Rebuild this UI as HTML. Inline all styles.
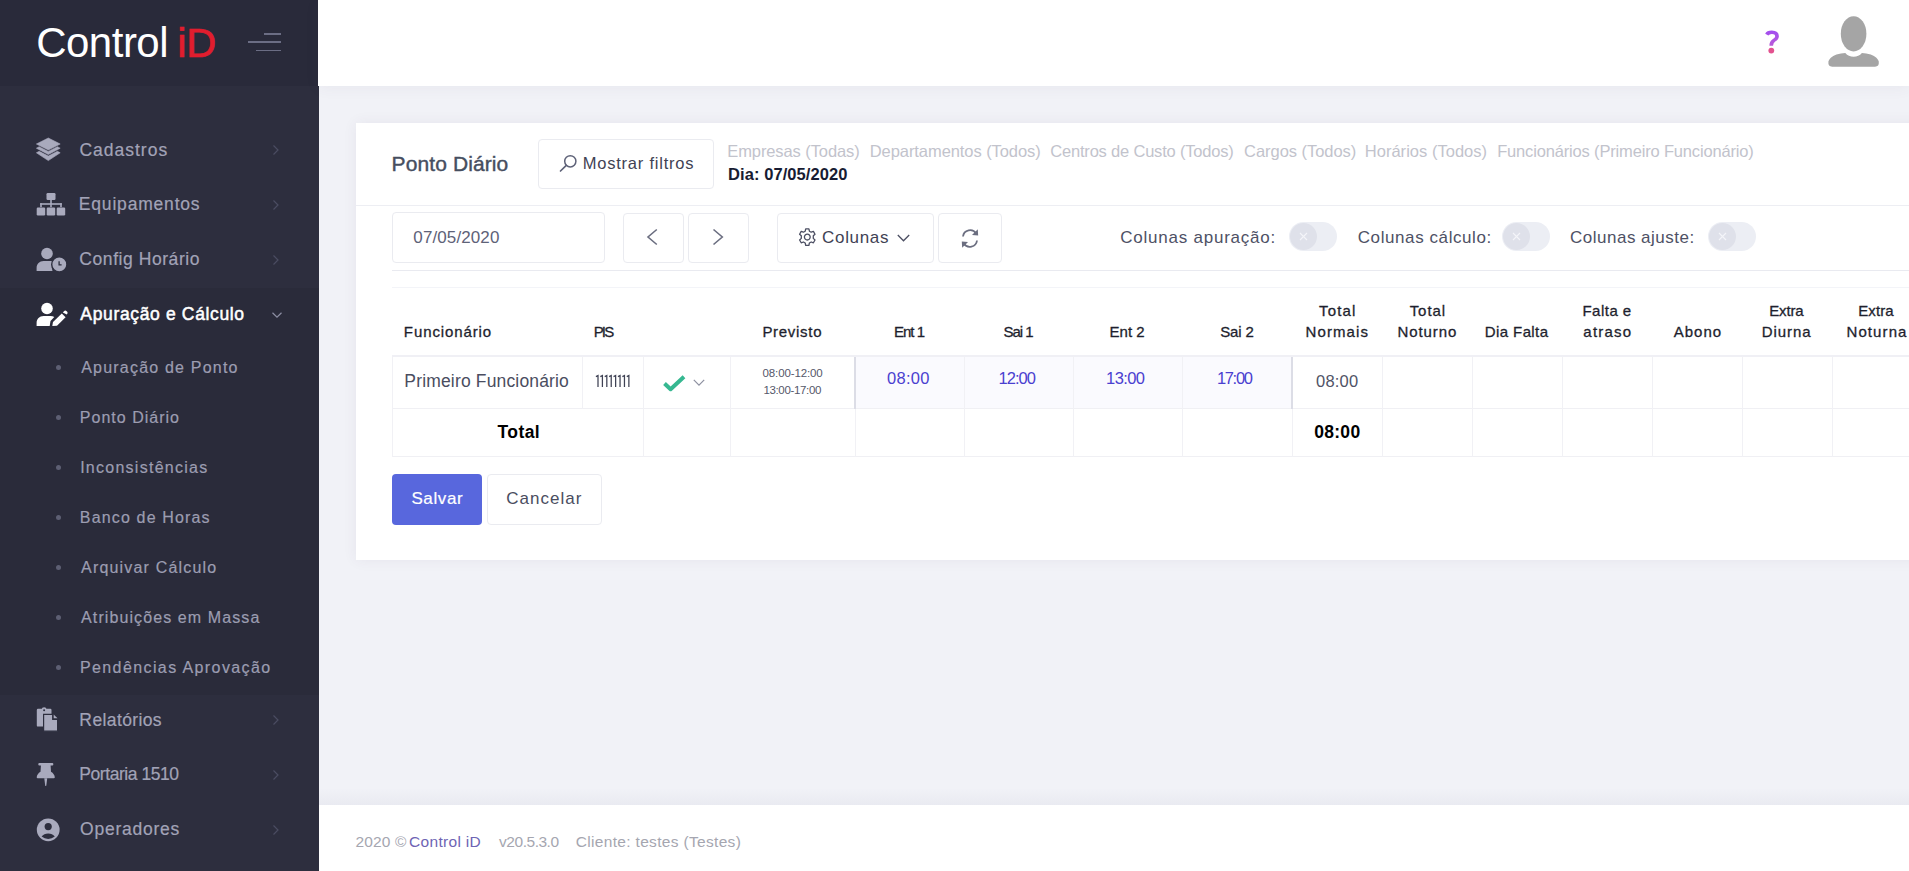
<!DOCTYPE html>
<html><head><meta charset="utf-8">
<style>
html,body{margin:0;padding:0}
body{width:1909px;height:871px;overflow:hidden;position:relative;background:#f1f2f7;font-family:"Liberation Sans",sans-serif}
.a{position:absolute}
.t{position:absolute;line-height:0;white-space:pre;font-family:"Liberation Sans",sans-serif}
.bx{position:absolute;box-sizing:border-box;border:1px solid #eaebf0;border-radius:4px;background:#fff}
.hl{position:absolute;height:1px;background:#ebedf3}
.vl{position:absolute;width:1px;background:#ebedf3}
svg{position:absolute;overflow:visible}
</style></head><body>
<!-- sidebar -->
<div class="a" style="left:0;top:0;width:319px;height:871px;background:#2d2e3e"></div>
<div class="a" style="left:0;top:0;width:318px;height:86px;background:#292a3a"></div>
<div class="a" style="left:0;top:288px;width:319px;height:407px;background:#2a2b3a"></div>
<!-- hamburger -->
<div class="a" style="left:264px;top:33px;width:17px;height:1.5px;background:#6b6d84"></div>
<div class="a" style="left:248px;top:41px;width:33px;height:1.5px;background:#6b6d84"></div>
<div class="a" style="left:256px;top:49.5px;width:25px;height:1.5px;background:#6b6d84"></div>
<!-- icons -->
<svg style="left:36px;top:137px" width="25" height="25" viewBox="0 0 25 25"><g fill="#a9aabd" stroke="#a9aabd" stroke-width="0.6" stroke-linejoin="round">
<path d="M12.3 1 L24.2 7 L12.3 13 L0.4 7 Z"/>
<path d="M0.4 11.2 L3.2 9.7 L12.3 14.4 L21.4 9.7 L24.2 11.2 L12.3 17.6 Z"/>
<path d="M0.4 15.8 L3.2 14.3 L12.3 19.1 L21.4 14.3 L24.2 15.8 L12.3 23.6 Z"/></g></svg>
<svg style="left:36px;top:192px" width="31" height="25" viewBox="0 0 31 25"><g fill="#a9aabd">
<rect x="10.5" y="1" width="9" height="7" rx="1.2"/>
<rect x="14.2" y="7" width="1.6" height="5"/>
<rect x="4.2" y="11.2" width="21.6" height="1.6"/>
<rect x="4.2" y="11.2" width="1.6" height="4"/><rect x="14.2" y="11.2" width="1.6" height="4"/><rect x="24.2" y="11.2" width="1.6" height="4"/>
<rect x="0.7" y="15.5" width="8.5" height="8" rx="1.2"/><rect x="10.7" y="15.5" width="8.5" height="8" rx="1.2"/><rect x="20.7" y="15.5" width="8.5" height="8" rx="1.2"/></g></svg>
<svg style="left:36px;top:247px" width="31" height="25" viewBox="0 0 31 25"><g fill="#a9aabd">
<circle cx="11" cy="6.5" r="5.8"/>
<path d="M0.6 24 L0.6 21 C0.6 17 3.5 14 7.5 14 L14.5 14 C16.5 14 18 14.6 19 15.5 C17.2 17.2 16.2 19.5 16.2 22 C16.2 22.7 16.3 23.4 16.5 24 Z"/>
</g><circle cx="23.3" cy="17.4" r="7.6" fill="#a9aabd" stroke="#2d2e3e" stroke-width="1.4"/>
<path d="M23.1 14.2 L23.1 17.8 L25.6 17.8" stroke="#2d2e3e" stroke-width="1.3" fill="none"/></svg>
<svg style="left:36px;top:302px" width="31" height="25" viewBox="0 0 31 25"><g fill="#ffffff">
<circle cx="11" cy="6.5" r="5.8"/>
<path d="M0.6 24 L0.6 21 C0.6 17 3.5 14 7.5 14 L14.5 14 C16 14 17.3 14.4 18.3 15 L14.5 19 L13.7 24 Z"/>
<path d="M16.3 24 L17 20 L25.8 11.4 L29.6 15.2 L21 23.8 Z"/>
<path d="M26.8 10.4 L28 9.2 C28.8 8.4 29.8 8.4 30.6 9.2 L31 9.6 C31.8 10.4 31.8 11.4 31 12.2 L30.8 12.4 Z"/></g></svg>
<svg style="left:36px;top:707px" width="23" height="26" viewBox="0 0 23 26">
<path d="M2 1.8 H14.3 Q15.5 1.8 15.5 3 V19.6 H2 Q0.8 19.6 0.8 18.4 V3 Q0.8 1.8 2 1.8 Z" fill="#a9aabd"/>
<circle cx="8.1" cy="2.6" r="2.4" fill="#a9aabd"/><circle cx="8.1" cy="3.3" r="1" fill="#2d2e3e"/>
<path d="M7.6 7.4 H16.7 V12.3 H21.6 V24.2 H7.6 Z" fill="#a9aabd" stroke="#2d2e3e" stroke-width="1.2"/>
<path d="M17.7 7.6 L21.5 11.3 L17.7 11.3 Z" fill="#a9aabd"/></svg>
<svg style="left:36px;top:762px" width="20" height="26" viewBox="0 0 20 26"><g fill="#a9aabd">
<path d="M3.4 1 L16.4 1 Q17.3 1 17.3 1.9 L17.3 2.6 Q17.3 3.6 16.3 3.6 L14.6 3.6 L15 9.8 Q18.4 11.8 18.8 15.3 Q18.8 16.3 17.8 16.3 L1.7 16.3 Q0.7 16.3 0.7 15.3 Q1.1 11.8 4.5 9.8 L4.9 3.6 L3.3 3.6 Q2.3 3.6 2.3 2.6 L2.3 1.9 Q2.3 1 3.4 1 Z"/>
<path d="M8.3 16.3 L11.2 16.3 L10.3 23.5 Q9.75 24.6 9.2 23.5 Z"/></g></svg>
<svg style="left:36px;top:817px" width="25" height="25" viewBox="0 0 25 25">
<circle cx="12.2" cy="12.8" r="11.4" fill="#a9aabd"/>
<circle cx="12.2" cy="9.6" r="3.6" fill="#2d2e3e"/>
<path d="M5.6 19.6 Q8 16.6 12.2 16.6 Q16.4 16.6 18.8 19.6 Q15.9 21.9 12.2 21.9 Q8.5 21.9 5.6 19.6 Z" fill="#2d2e3e"/></svg>
<!-- chevrons -->
<svg style="left:272px;top:144px" width="8" height="12" viewBox="0 0 8 12"><path d="M1.5 1.5 L6 6 L1.5 10.5" stroke="#4b4d62" stroke-width="1.2" fill="none"/></svg>
<svg style="left:272px;top:199px" width="8" height="12" viewBox="0 0 8 12"><path d="M1.5 1.5 L6 6 L1.5 10.5" stroke="#4b4d62" stroke-width="1.2" fill="none"/></svg>
<svg style="left:272px;top:254px" width="8" height="12" viewBox="0 0 8 12"><path d="M1.5 1.5 L6 6 L1.5 10.5" stroke="#4b4d62" stroke-width="1.2" fill="none"/></svg>
<svg style="left:271px;top:311px" width="12" height="8" viewBox="0 0 12 8"><path d="M1.5 1.8 L6 6.2 L10.5 1.8" stroke="#8c8ea3" stroke-width="1.2" fill="none"/></svg>
<svg style="left:272px;top:714px" width="8" height="12" viewBox="0 0 8 12"><path d="M1.5 1.5 L6 6 L1.5 10.5" stroke="#4b4d62" stroke-width="1.2" fill="none"/></svg>
<svg style="left:272px;top:769px" width="8" height="12" viewBox="0 0 8 12"><path d="M1.5 1.5 L6 6 L1.5 10.5" stroke="#4b4d62" stroke-width="1.2" fill="none"/></svg>
<svg style="left:272px;top:824px" width="8" height="12" viewBox="0 0 8 12"><path d="M1.5 1.5 L6 6 L1.5 10.5" stroke="#4b4d62" stroke-width="1.2" fill="none"/></svg>
<!-- bullets -->
<div class="a" style="left:56px;top:365px;width:5px;height:5px;border-radius:50%;background:#5d5f73"></div>
<div class="a" style="left:56px;top:415px;width:5px;height:5px;border-radius:50%;background:#5d5f73"></div>
<div class="a" style="left:56px;top:465px;width:5px;height:5px;border-radius:50%;background:#5d5f73"></div>
<div class="a" style="left:56px;top:515px;width:5px;height:5px;border-radius:50%;background:#5d5f73"></div>
<div class="a" style="left:56px;top:565px;width:5px;height:5px;border-radius:50%;background:#5d5f73"></div>
<div class="a" style="left:56px;top:615px;width:5px;height:5px;border-radius:50%;background:#5d5f73"></div>
<div class="a" style="left:56px;top:665px;width:5px;height:5px;border-radius:50%;background:#5d5f73"></div>

<!-- header -->
<div class="a" style="left:318px;top:0;width:1591px;height:86px;background:#fff;box-shadow:0 2px 14px rgba(82,63,105,0.06)"></div>
<svg style="left:1760px;top:28px" width="24" height="30" viewBox="0 0 24 30">
<defs><linearGradient id="qg" x1="0" y1="0" x2="0" y2="1"><stop offset="0" stop-color="#a24ef0"/><stop offset="1" stop-color="#b85ad8"/></linearGradient></defs>
<path d="M5.2 5.8 Q6.5 2.6 11.8 2.6 Q18.8 2.8 18.9 8.3 Q18.8 11.4 15.2 13.6 Q13.3 14.8 13 17.8 L9.4 17.8 Q9.3 13.4 12.6 11.2 Q15.3 9.6 15.2 8.2 Q15 5.8 11.8 5.9 Q9.5 5.9 8.3 7.6 Z" fill="url(#qg)"/>
<circle cx="11.3" cy="22.6" r="2.9" fill="#e3528f"/></svg>
<svg style="left:1827px;top:15px" width="53" height="53" viewBox="0 0 53 53"><g fill="#a5a5a5">
<ellipse cx="26.6" cy="18.8" rx="12.8" ry="17.6"/>
<path d="M9.5 39.5 Q14 38.4 18.3 38 Q21.5 41.8 26.6 41.8 Q31.7 41.8 34.9 38 Q39.2 38.4 43.7 39.5 Q51 42.6 51.8 46.6 Q52.3 51.8 48 51.8 L5.2 51.8 Q0.9 51.8 1.4 46.6 Q2.2 42.6 9.5 39.5 Z"/></g></svg>

<!-- card -->
<div class="a" style="left:356px;top:123px;width:1600px;height:437px;background:#fff;box-shadow:0 0 13px rgba(82,63,105,0.07)"></div>
<div class="hl" style="left:356px;top:205px;width:1553px;background:#edeef3"></div>
<div class="bx" style="left:538px;top:139px;width:176px;height:50px"></div>
<svg style="left:559px;top:154px" width="20" height="19" viewBox="0 0 20 19"><circle cx="11.3" cy="7.3" r="5.6" stroke="#5e6278" stroke-width="1.5" fill="none"/><path d="M7.3 11.3 L1.5 17" stroke="#5e6278" stroke-width="1.7" stroke-linecap="round"/></svg>
<div class="bx" style="left:392px;top:212px;width:213px;height:51px"></div>
<div class="bx" style="left:623px;top:213px;width:61px;height:50px"></div>
<div class="bx" style="left:688px;top:213px;width:61px;height:50px"></div>
<svg style="left:645px;top:228px" width="14" height="18" viewBox="0 0 14 18"><path d="M11.8 1.5 L3 9 L11.8 16.5" stroke="#6b6e80" stroke-width="1.6" fill="none"/></svg>
<svg style="left:711px;top:228px" width="14" height="18" viewBox="0 0 14 18"><path d="M2.5 1.5 L11.3 9 L2.5 16.5" stroke="#6b6e80" stroke-width="1.6" fill="none"/></svg>
<div class="bx" style="left:777px;top:213px;width:157px;height:50px"></div>
<div class="bx" style="left:938px;top:213px;width:64px;height:50px"></div>
<svg style="left:797px;top:227px" width="20" height="20" viewBox="0 0 20 20"><g transform="translate(10.3,10.1)" fill="none" stroke="#4b4e62" stroke-width="1.3">
<path d="M-1.6 -8.2 L1.6 -8.2 L2.1 -5.9 L3.9 -4.9 L6.1 -5.7 L7.7 -2.9 L6 -1.3 L6 1.3 L7.7 2.9 L6.1 5.7 L3.9 4.9 L2.1 5.9 L1.6 8.2 L-1.6 8.2 L-2.1 5.9 L-3.9 4.9 L-6.1 5.7 L-7.7 2.9 L-6 1.3 L-6 -1.3 L-7.7 -2.9 L-6.1 -5.7 L-3.9 -4.9 L-2.1 -5.9 Z" stroke-linejoin="round"/>
<circle cx="0" cy="0" r="2.9"/></g></svg>
<svg style="left:896px;top:233px" width="15" height="10" viewBox="0 0 15 10"><path d="M1.8 2 L7.5 7.8 L13.2 2" stroke="#4b4e62" stroke-width="1.3" fill="none"/></svg>
<svg style="left:960px;top:228px" width="20" height="21" viewBox="0 0 20 21"><g fill="none" stroke="#6b6e80" stroke-width="1.8">
<path d="M3 8.5 A7.2 7.2 0 0 1 16.2 5.5"/><path d="M17 12.5 A7.2 7.2 0 0 1 3.8 15.5"/></g>
<g fill="#6b6e80"><path d="M17.8 1.2 L18.2 7.6 L12 7 Z"/><path d="M2.2 19.8 L1.8 13.4 L8 14 Z"/></g></svg>
<div class="hl" style="left:392px;top:270px;width:1517px;background:#e9eaf0"></div>
<div class="hl" style="left:392px;top:287px;width:1517px;background:#f3f4f8"></div>
<!-- toggles -->
<div class="a" style="left:1289px;top:222px;width:48px;height:29px;border-radius:15px;background:#eceef4"></div>
<div class="a" style="left:1290px;top:223px;width:27px;height:27px;border-radius:50%;background:#dfe1ea"></div>
<div class="a" style="left:1502px;top:222px;width:48px;height:29px;border-radius:15px;background:#eceef4"></div>
<div class="a" style="left:1503px;top:223px;width:27px;height:27px;border-radius:50%;background:#dfe1ea"></div>
<div class="a" style="left:1708px;top:222px;width:48px;height:29px;border-radius:15px;background:#eceef4"></div>
<div class="a" style="left:1709px;top:223px;width:27px;height:27px;border-radius:50%;background:#dfe1ea"></div>
<svg style="left:1299px;top:232px" width="9" height="9" viewBox="0 0 9 9"><path d="M1 1 L8 8 M8 1 L1 8" stroke="#f4f5f9" stroke-width="1.1"/></svg>
<svg style="left:1512px;top:232px" width="9" height="9" viewBox="0 0 9 9"><path d="M1 1 L8 8 M8 1 L1 8" stroke="#f4f5f9" stroke-width="1.1"/></svg>
<svg style="left:1718px;top:232px" width="9" height="9" viewBox="0 0 9 9"><path d="M1 1 L8 8 M8 1 L1 8" stroke="#f4f5f9" stroke-width="1.1"/></svg>

<!-- table -->
<div class="a" style="left:855px;top:356px;width:437px;height:53px;background:#fafafe"></div>
<div class="hl" style="left:392px;top:355px;width:1517px;height:2px;background:#f0f0f5"></div>
<div class="hl" style="left:392px;top:408px;width:1517px;background:#f0f0f4"></div>
<div class="hl" style="left:392px;top:456px;width:1517px;background:#f0f0f4"></div>
<div class="vl" style="left:392px;top:357px;height:100px;background:#f1f1f5"></div>
<div class="vl" style="left:582px;top:357px;height:52px;background:#f1f1f5"></div>
<div class="vl" style="left:643px;top:357px;height:100px;background:#f1f1f5"></div>
<div class="vl" style="left:730px;top:357px;height:100px;background:#f1f1f5"></div>
<div class="vl" style="left:855px;top:357px;height:100px;background:#f1f1f5"></div>
<div class="vl" style="left:854px;top:357px;height:52px;width:2px;background:#dcdde6"></div>
<div class="vl" style="left:964px;top:357px;height:100px;background:#f1f1f5"></div>
<div class="vl" style="left:1073px;top:357px;height:100px;background:#f1f1f5"></div>
<div class="vl" style="left:1182px;top:357px;height:100px;background:#f1f1f5"></div>
<div class="vl" style="left:1292px;top:357px;height:100px;background:#f1f1f5"></div>
<div class="vl" style="left:1291px;top:357px;height:52px;width:2px;background:#dcdde6"></div>
<div class="vl" style="left:1382px;top:357px;height:100px;background:#f1f1f5"></div>
<div class="vl" style="left:1472px;top:357px;height:100px;background:#f1f1f5"></div>
<div class="vl" style="left:1562px;top:357px;height:100px;background:#f1f1f5"></div>
<div class="vl" style="left:1652px;top:357px;height:100px;background:#f1f1f5"></div>
<div class="vl" style="left:1742px;top:357px;height:100px;background:#f1f1f5"></div>
<div class="vl" style="left:1832px;top:357px;height:100px;background:#f1f1f5"></div>
<svg style="left:663px;top:375px" width="23" height="16" viewBox="0 0 23 16"><path d="M1.5 8.5 L7.6 14.2 L21 1.8" stroke="#36b891" stroke-width="4" fill="none" stroke-linejoin="round"/></svg>
<svg style="left:692px;top:378px" width="14" height="10" viewBox="0 0 14 10"><path d="M1.8 1.8 L7 7.2 L12.2 1.8" stroke="#8d90a0" stroke-width="1.2" fill="none"/></svg>
<svg style="left:595px;top:375px" width="36" height="13" viewBox="0 0 36 13"><g stroke="#3f4254" stroke-width="1.25" fill="none"><path d="M0.90 1.6 L3.00 0.6 L3.00 11.9"/><path d="M5.31 1.6 L7.41 0.6 L7.41 11.9"/><path d="M9.72 1.6 L11.82 0.6 L11.82 11.9"/><path d="M14.13 1.6 L16.23 0.6 L16.23 11.9"/><path d="M18.54 1.6 L20.64 0.6 L20.64 11.9"/><path d="M22.95 1.6 L25.05 0.6 L25.05 11.9"/><path d="M27.36 1.6 L29.46 0.6 L29.46 11.9"/><path d="M31.77 1.6 L33.87 0.6 L33.87 11.9"/></g></svg>
<!-- buttons -->
<div class="a" style="left:392px;top:474px;width:90px;height:51px;border-radius:4px;background:#5867dd"></div>
<div class="bx" style="left:487px;top:474px;width:115px;height:51px"></div>

<!-- footer -->
<div class="a" style="left:319px;top:788px;width:1590px;height:17px;background:linear-gradient(to bottom,rgba(60,60,110,0),rgba(60,60,110,0.045))"></div>
<div class="a" style="left:319px;top:805px;width:1590px;height:66px;background:#fff"></div>
<div id="m1" class="t" style="left:79.40px;top:149.51px;font-size:17.5px;font-weight:normal;color:#a2a3b7;letter-spacing:0.998px;-webkit-text-stroke:0.2px #a2a3b7">Cadastros</div>
<div id="m2" class="t" style="left:78.84px;top:204.21px;font-size:17.5px;font-weight:normal;color:#a2a3b7;letter-spacing:0.809px;-webkit-text-stroke:0.2px #a2a3b7">Equipamentos</div>
<div id="m3" class="t" style="left:79.35px;top:258.81px;font-size:17.5px;font-weight:normal;color:#a2a3b7;letter-spacing:0.560px;-webkit-text-stroke:0.2px #a2a3b7">Config Horário</div>
<div id="m4" class="t" style="left:80.37px;top:313.60px;font-size:17.5px;font-weight:normal;color:#ffffff;letter-spacing:0.647px;-webkit-text-stroke:0.5px #ffffff">Apuração e Cálculo</div>
<div id="s1" class="t" style="left:81.25px;top:367.91px;font-size:16px;font-weight:normal;color:#9c9db1;letter-spacing:1.201px;-webkit-text-stroke:0.2px #9c9db1">Apuração de Ponto</div>
<div id="s2" class="t" style="left:79.87px;top:417.91px;font-size:16px;font-weight:normal;color:#9c9db1;letter-spacing:1.003px;-webkit-text-stroke:0.2px #9c9db1">Ponto Diário</div>
<div id="s3" class="t" style="left:80.15px;top:468.01px;font-size:16px;font-weight:normal;color:#9c9db1;letter-spacing:1.264px;-webkit-text-stroke:0.2px #9c9db1">Inconsistências</div>
<div id="s4" class="t" style="left:79.87px;top:517.91px;font-size:16px;font-weight:normal;color:#9c9db1;letter-spacing:1.151px;-webkit-text-stroke:0.2px #9c9db1">Banco de Horas</div>
<div id="s5" class="t" style="left:81.08px;top:568.10px;font-size:16px;font-weight:normal;color:#9c9db1;letter-spacing:1.179px;-webkit-text-stroke:0.2px #9c9db1">Arquivar Cálculo</div>
<div id="s6" class="t" style="left:81.08px;top:618.01px;font-size:16px;font-weight:normal;color:#9c9db1;letter-spacing:1.096px;-webkit-text-stroke:0.2px #9c9db1">Atribuições em Massa</div>
<div id="s7" class="t" style="left:79.94px;top:667.91px;font-size:16px;font-weight:normal;color:#9c9db1;letter-spacing:1.399px;-webkit-text-stroke:0.2px #9c9db1">Pendências Aprovação</div>
<div id="m5" class="t" style="left:79.37px;top:719.51px;font-size:17.5px;font-weight:normal;color:#a2a3b7;letter-spacing:0.386px;-webkit-text-stroke:0.2px #a2a3b7">Relatórios</div>
<div id="m6" class="t" style="left:79.37px;top:774.21px;font-size:17.5px;font-weight:normal;color:#a2a3b7;letter-spacing:-0.445px;-webkit-text-stroke:0.2px #a2a3b7">Portaria 1510</div>
<div id="m7" class="t" style="left:80.01px;top:829.01px;font-size:17.5px;font-weight:normal;color:#a2a3b7;letter-spacing:0.773px;-webkit-text-stroke:0.2px #a2a3b7">Operadores</div>
<div id="logo1" class="t" style="left:36.18px;top:42.51px;font-size:42px;font-weight:normal;color:#ffffff;letter-spacing:-0.502px">Control</div>
<div id="logo2" class="t" style="left:177.18px;top:42.50px;font-size:41.5px;font-weight:normal;color:#e11d2e;letter-spacing:-0.081px;-webkit-text-stroke:0.7px #e11d2e">iD</div>
<div id="ph" class="t" style="left:391.55px;top:163.60px;font-size:21px;font-weight:normal;color:#464e5f;letter-spacing:0.107px;-webkit-text-stroke:0.4px #464e5f">Ponto Diário</div>
<div id="mf" class="t" style="left:582.73px;top:162.91px;font-size:16.5px;font-weight:normal;color:#3f4254;letter-spacing:0.776px">Mostrar filtros</div>
<div id="f1" class="t" style="left:727.25px;top:150.80px;font-size:16.5px;font-weight:normal;color:#c2c3cc;letter-spacing:-0.095px">Empresas (Todas)</div>
<div id="f2" class="t" style="left:869.75px;top:150.80px;font-size:16.5px;font-weight:normal;color:#c2c3cc;letter-spacing:-0.071px">Departamentos (Todos)</div>
<div id="f3" class="t" style="left:1050.29px;top:150.80px;font-size:16.5px;font-weight:normal;color:#c2c3cc;letter-spacing:-0.197px">Centros de Custo (Todos)</div>
<div id="f4" class="t" style="left:1244.05px;top:150.80px;font-size:16.5px;font-weight:normal;color:#c2c3cc;letter-spacing:-0.044px">Cargos (Todos)</div>
<div id="f5" class="t" style="left:1364.74px;top:150.80px;font-size:16.5px;font-weight:normal;color:#c2c3cc;letter-spacing:0.027px">Horários (Todos)</div>
<div id="f6" class="t" style="left:1497.18px;top:150.80px;font-size:16.5px;font-weight:normal;color:#c2c3cc;letter-spacing:-0.166px">Funcionários (Primeiro Funcionário)</div>
<div id="dia" class="t" style="left:728.12px;top:174.41px;font-size:16.5px;font-weight:bold;color:#181c32;letter-spacing:0.067px">Dia: 07/05/2020</div>
<div id="date" class="t" style="left:413.36px;top:237.81px;font-size:17px;font-weight:normal;color:#5e6278;letter-spacing:0.103px">07/05/2020</div>
<div id="col" class="t" style="left:822.09px;top:237.90px;font-size:17px;font-weight:normal;color:#3f4254;letter-spacing:0.674px">Colunas</div>
<div id="ca1" class="t" style="left:1120.25px;top:238.21px;font-size:17px;font-weight:normal;color:#4e5165;letter-spacing:0.767px">Colunas apuração:</div>
<div id="ca2" class="t" style="left:1357.75px;top:238.21px;font-size:17px;font-weight:normal;color:#4e5165;letter-spacing:0.584px">Colunas cálculo:</div>
<div id="ca3" class="t" style="left:1569.95px;top:238.21px;font-size:17px;font-weight:normal;color:#4e5165;letter-spacing:0.511px">Colunas ajuste:</div>
<div id="h1" class="t" style="left:403.86px;top:332.00px;font-size:15px;font-weight:normal;color:#1e1f2e;letter-spacing:0.890px;-webkit-text-stroke:0.3px #1e1f2e">Funcionário</div>
<div id="h2" class="t" style="left:593.64px;top:332.00px;font-size:15px;font-weight:normal;color:#1e1f2e;letter-spacing:-1.756px;-webkit-text-stroke:0.3px #1e1f2e">PIS</div>
<div id="h3" class="t" style="left:762.42px;top:332.00px;font-size:15px;font-weight:normal;color:#1e1f2e;letter-spacing:0.697px;-webkit-text-stroke:0.3px #1e1f2e">Previsto</div>
<div id="h4" class="t" style="left:893.90px;top:332.00px;font-size:15px;font-weight:normal;color:#1e1f2e;letter-spacing:-0.958px;-webkit-text-stroke:0.3px #1e1f2e">Ent 1</div>
<div id="h5" class="t" style="left:1003.40px;top:332.00px;font-size:15px;font-weight:normal;color:#1e1f2e;letter-spacing:-0.979px;-webkit-text-stroke:0.3px #1e1f2e">Sai 1</div>
<div id="h6" class="t" style="left:1109.57px;top:332.00px;font-size:15px;font-weight:normal;color:#1e1f2e;letter-spacing:0.026px;-webkit-text-stroke:0.3px #1e1f2e">Ent 2</div>
<div id="h7" class="t" style="left:1220.13px;top:332.00px;font-size:15px;font-weight:normal;color:#1e1f2e;letter-spacing:-0.146px;-webkit-text-stroke:0.3px #1e1f2e">Sai 2</div>
<div id="h8a" class="t" style="left:1318.99px;top:311.00px;font-size:15px;font-weight:normal;color:#1e1f2e;letter-spacing:1.185px;-webkit-text-stroke:0.3px #1e1f2e">Total</div>
<div id="h8b" class="t" style="left:1305.48px;top:332.00px;font-size:15px;font-weight:normal;color:#1e1f2e;letter-spacing:1.118px;-webkit-text-stroke:0.3px #1e1f2e">Normais</div>
<div id="h9a" class="t" style="left:1409.65px;top:311.00px;font-size:15px;font-weight:normal;color:#1e1f2e;letter-spacing:0.970px;-webkit-text-stroke:0.3px #1e1f2e">Total</div>
<div id="h9b" class="t" style="left:1397.46px;top:332.00px;font-size:15px;font-weight:normal;color:#1e1f2e;letter-spacing:0.912px;-webkit-text-stroke:0.3px #1e1f2e">Noturno</div>
<div id="h10" class="t" style="left:1484.86px;top:332.00px;font-size:15px;font-weight:normal;color:#1e1f2e;letter-spacing:0.388px;-webkit-text-stroke:0.3px #1e1f2e">Dia Falta</div>
<div id="h11a" class="t" style="left:1582.42px;top:311.00px;font-size:15px;font-weight:normal;color:#1e1f2e;letter-spacing:0.491px;-webkit-text-stroke:0.3px #1e1f2e">Falta e</div>
<div id="h11b" class="t" style="left:1583.37px;top:332.00px;font-size:15px;font-weight:normal;color:#1e1f2e;letter-spacing:1.185px;-webkit-text-stroke:0.3px #1e1f2e">atraso</div>
<div id="h12" class="t" style="left:1673.67px;top:332.00px;font-size:15px;font-weight:normal;color:#1e1f2e;letter-spacing:1.019px;-webkit-text-stroke:0.3px #1e1f2e">Abono</div>
<div id="h13a" class="t" style="left:1769.21px;top:311.00px;font-size:15px;font-weight:normal;color:#1e1f2e;letter-spacing:-0.144px;-webkit-text-stroke:0.3px #1e1f2e">Extra</div>
<div id="h13b" class="t" style="left:1761.64px;top:332.00px;font-size:15px;font-weight:normal;color:#1e1f2e;letter-spacing:0.977px;-webkit-text-stroke:0.3px #1e1f2e">Diurna</div>
<div id="h14a" class="t" style="left:1858.21px;top:311.00px;font-size:15px;font-weight:normal;color:#1e1f2e;letter-spacing:0.106px;-webkit-text-stroke:0.3px #1e1f2e">Extra</div>
<div id="h14b" class="t" style="left:1846.51px;top:332.00px;font-size:15px;font-weight:normal;color:#1e1f2e;letter-spacing:1.094px;-webkit-text-stroke:0.3px #1e1f2e">Noturna</div>
<div id="r1" class="t" style="left:404.37px;top:381.40px;font-size:17.5px;font-weight:normal;color:#4a4d60;letter-spacing:0.159px">Primeiro Funcionário</div>
<div id="pv1" class="t" style="left:762.53px;top:373.01px;font-size:11.5px;font-weight:normal;color:#55586a;letter-spacing:-0.118px">08:00-12:00</div>
<div id="pv2" class="t" style="left:763.38px;top:390.01px;font-size:11.5px;font-weight:normal;color:#55586a;letter-spacing:-0.332px">13:00-17:00</div>
<div id="e1" class="t" style="left:886.99px;top:378.01px;font-size:16.5px;font-weight:normal;color:#4a40d0;letter-spacing:0.291px">08:00</div>
<div id="e2" class="t" style="left:998.57px;top:378.01px;font-size:16.5px;font-weight:normal;color:#4a40d0;letter-spacing:-0.985px">12:00</div>
<div id="e3" class="t" style="left:1106.09px;top:378.01px;font-size:16.5px;font-weight:normal;color:#4a40d0;letter-spacing:-0.590px">13:00</div>
<div id="e4" class="t" style="left:1216.91px;top:378.01px;font-size:16.5px;font-weight:normal;color:#4a40d0;letter-spacing:-1.321px">17:00</div>
<div id="tn" class="t" style="left:1316.07px;top:380.80px;font-size:16.5px;font-weight:normal;color:#505366;letter-spacing:0.203px">08:00</div>
<div id="tot" class="t" style="left:497.55px;top:432.21px;font-size:17.5px;font-weight:bold;color:#000000;letter-spacing:0.417px">Total</div>
<div id="tot2" class="t" style="left:1314.22px;top:432.01px;font-size:17.5px;font-weight:bold;color:#000000;letter-spacing:0.286px">08:00</div>
<div id="sv" class="t" style="left:411.41px;top:499.11px;font-size:17px;font-weight:normal;color:#ffffff;letter-spacing:0.609px;-webkit-text-stroke:0.2px #ffffff">Salvar</div>
<div id="cc" class="t" style="left:506.14px;top:499.11px;font-size:17px;font-weight:normal;color:#4a4d60;letter-spacing:1.043px">Cancelar</div>
<div id="ft1" class="t" style="left:355.61px;top:841.90px;font-size:15.5px;font-weight:normal;color:#a5a6b0;letter-spacing:0.105px">2020 ©</div>
<div id="ft2" class="t" style="left:408.99px;top:841.90px;font-size:15.5px;font-weight:normal;color:#6e64b4;letter-spacing:0.320px">Control iD</div>
<div id="ft3" class="t" style="left:499.09px;top:841.90px;font-size:15.5px;font-weight:normal;color:#a5a6b0;letter-spacing:-0.474px">v20.5.3.0</div>
<div id="ft4" class="t" style="left:575.83px;top:841.90px;font-size:15.5px;font-weight:normal;color:#a5a6b0;letter-spacing:0.319px">Cliente: testes (Testes)</div>
</body></html>
